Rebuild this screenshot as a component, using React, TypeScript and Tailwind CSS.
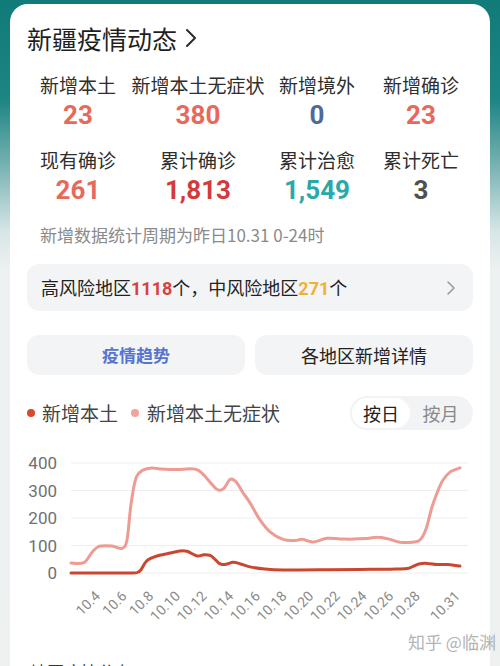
import React from "react";

type P = [number, number];

const pink: P[] = [
  [71, 36], [84, 38], [92, 75], [99, 97], [112, 98], [122, 90], [127, 120], [131, 250],
  [136, 345], [143, 374], [152, 382], [162, 378], [176, 376], [190, 379], [198, 374],
  [205, 352], [212, 322], [218, 302], [224, 308], [230, 340], [236, 332], [243, 292],
  [250, 255], [260, 193], [270, 150], [283, 122], [295, 118], [302, 123], [313, 113],
  [327, 126], [340, 124], [350, 123], [365, 125], [377, 130], [388, 124], [400, 112],
  [412, 112], [420, 120], [426, 160], [432, 240], [438, 300], [443, 338], [450, 367], [460, 382],
];

const red: P[] = [
  [71, 0], [100, 0], [133, 0], [138, 3], [141, 12], [147, 45], [157, 62], [167, 70],
  [180, 80], [187, 79], [197, 62], [204, 66], [210, 64], [215, 50], [220, 33], [226, 32],
  [233, 39], [240, 34], [250, 22], [265, 15], [283, 11], [300, 11], [330, 12], [360, 13],
  [390, 14], [407, 16], [413, 24], [420, 34], [428, 35], [437, 31], [448, 31], [460, 25],
];

function toPath(pts: P[]) {
  const Q = pts.map(([x, v]) => [x - 27, 143 - v * 0.275]);
  let d = `M${Q[0][0].toFixed(1)},${Q[0][1].toFixed(1)}`;
  for (let i = 0; i < Q.length - 1; i++) {
    const p0 = Q[i - 1] || Q[i];
    const p1 = Q[i];
    const p2 = Q[i + 1];
    const p3 = Q[i + 2] || p2;
    const t = 1 / 6;
    const c1x = p1[0] + (p2[0] - p0[0]) * t;
    const c1y = p1[1] + (p2[1] - p0[1]) * t;
    const c2x = p2[0] - (p3[0] - p1[0]) * t;
    const c2y = p2[1] - (p3[1] - p1[1]) * t;
    d += ` C${c1x.toFixed(1)},${c1y.toFixed(1)} ${c2x.toFixed(1)},${c2y.toFixed(1)} ${p2[0].toFixed(1)},${p2[1].toFixed(1)}`;
  }
  return d;
}

const xDays = [4, 6, 8, 10, 12, 14, 16, 18, 20, 22, 24, 26, 28, 31];

function Chart() {
  const yTicks = [400, 300, 200, 100, 0];
  return (
    <svg width="446" height="200" viewBox="0 0 446 200" className="block">
      {yTicks.map((v) => {
        const y = 143 - v * 0.275;
        return (
          <g key={v}>
            <line x1="44" x2="441" y1={y} y2={y} stroke="#eeeeee" strokeWidth="1" />
            <text
              x="30"
              y={y + 6}
              textAnchor="end"
              fontSize="17"
              fill="#707070"
              fontFamily="Roboto, 'Noto Sans', sans-serif"
            >
              {v}
            </text>
          </g>
        );
      })}
      <path d={toPath(pink)} fill="none" stroke="#ee9c93" strokeWidth="3" strokeLinejoin="round" strokeLinecap="round" />
      <path d={toPath(red)} fill="none" stroke="#c9472e" strokeWidth="3" strokeLinejoin="round" strokeLinecap="round" />
      {xDays.map((d) => {
        const x = 101 + (d - 4) * 13.33 - 27;
        const y = 167;
        return (
          <text
            key={d}
            x={x}
            y={y}
            textAnchor="end"
            fontSize="14"
            fill="#8a8a8a"
            fontFamily="Roboto, 'Noto Sans', sans-serif"
            transform={`rotate(-45 ${x} ${y})`}
          >
            {`10.${d}`}
          </text>
        );
      })}
    </svg>
  );
}

const stats = [
  { label: "新增本土", value: "23", color: "text-[#e8695b]" },
  { label: "新增本土无症状", value: "380", color: "text-[#e8695b]" },
  { label: "新增境外", value: "0", color: "text-[#4d6a98]" },
  { label: "新增确诊", value: "23", color: "text-[#e8695b]" },
  { label: "现有确诊", value: "261", color: "text-[#e66a5c]" },
  { label: "累计确诊", value: "1,813", color: "text-[#d33a3c]" },
  { label: "累计治愈", value: "1,549", color: "text-[#2aa9a8]" },
  { label: "累计死亡", value: "3", color: "text-[#505050]" },
];

export default function App() {
  return (
    <div className="relative h-[666px] w-[500px] overflow-hidden bg-[linear-gradient(180deg,#117b7a_0px,#1d8584_100px,#7fb5b5_170px,#d5e5e5_230px,#eef1f1_270px,#eff1f1_666px)] font-['Noto_Sans_CJK_SC',sans-serif]">
      <div className="mx-[10px] mt-[4px] h-[720px] rounded-t-[18px] bg-white px-[17px] pt-[17px]">
        <div className="flex h-[34px] items-center text-[25px] leading-[34px] text-[#1f1f1f]">
          <span>新疆疫情动态</span>
          <svg width="14" height="20" viewBox="0 0 14 20" className="ml-[7px]">
            <polyline points="3,2 11,10 3,18" fill="none" stroke="#2a2a2a" strokeWidth="2" strokeLinecap="round" strokeLinejoin="round" />
          </svg>
        </div>

        <div className="mt-[17px] grid grid-cols-[102px_138px_100px_108px] gap-y-[15px]">
          {stats.map((s) => (
            <div key={s.label} className="flex flex-col items-center">
              <div className="h-[26px] whitespace-nowrap text-[19px] leading-[26px] text-[#2e2e2e]">{s.label}</div>
              <div className={`h-[34px] font-['Roboto','Noto_Sans',sans-serif] text-[26px] font-bold leading-[34px] ${s.color}`}>
                {s.value}
              </div>
            </div>
          ))}
        </div>

        <div className="mt-[16px] h-[24px] pl-[13px] text-[17px] leading-[24px] text-[#8a8a8a]">
          新增数据统计周期为昨日10.31 0-24时
        </div>

        <div className="mt-[17px] flex h-[47px] items-center justify-between rounded-[12px] bg-[#f3f4f6] pl-[14px] pr-[17px] text-[18px] text-[#222]">
          <div>
            高风险地区<span className="font-['Roboto',sans-serif] font-bold text-[#d8413d]">1118</span>个，中风险地区
            <span className="font-['Roboto',sans-serif] font-bold text-[#f0b132]">271</span>个
          </div>
          <svg width="10" height="16" viewBox="0 0 10 16">
            <polyline points="2,2 8,8 2,14" fill="none" stroke="#9a9a9a" strokeWidth="1.6" strokeLinecap="round" strokeLinejoin="round" />
          </svg>
        </div>

        <div className="mt-[24px] flex gap-[10px]">
          <div className="flex h-[40px] flex-1 items-center justify-center rounded-[12px] bg-[#f3f4f6] text-[17px] font-semibold text-[#5674cf]">
            疫情趋势
          </div>
          <div className="flex h-[40px] flex-1 items-center justify-center rounded-[12px] bg-[#f3f4f6] text-[18px] text-[#222]">
            各地区新增详情
          </div>
        </div>

        <div className="mt-[21px] flex h-[34px] items-center justify-between">
          <div className="flex items-center text-[19px] text-[#444]">
            <span className="h-[8px] w-[8px] rounded-full bg-[#d9472d]" />
            <span className="ml-[7px]">新增本土</span>
            <span className="ml-[13px] h-[8px] w-[8px] rounded-full bg-[#f2a39b]" />
            <span className="ml-[8px]">新增本土无症状</span>
          </div>
          <div className="flex h-[34px] w-[123px] items-center rounded-full bg-[#f2f3f5] p-[2px] text-[18px]">
            <div className="flex h-[30px] w-[58px] items-center justify-center rounded-full bg-white text-[#222]">按日</div>
            <div className="flex-1 text-center text-[#8a8a8a]">按月</div>
          </div>
        </div>

        <Chart />

        <div className="mt-[30px] pl-[3px] text-[17px] leading-[24px] text-[#333]">地区疫情分布</div>
      </div>

      <div className="absolute left-[408px] top-[629px] text-[17px] text-[#b3b3b3]">知乎 @临渊</div>
    </div>
  );
}
